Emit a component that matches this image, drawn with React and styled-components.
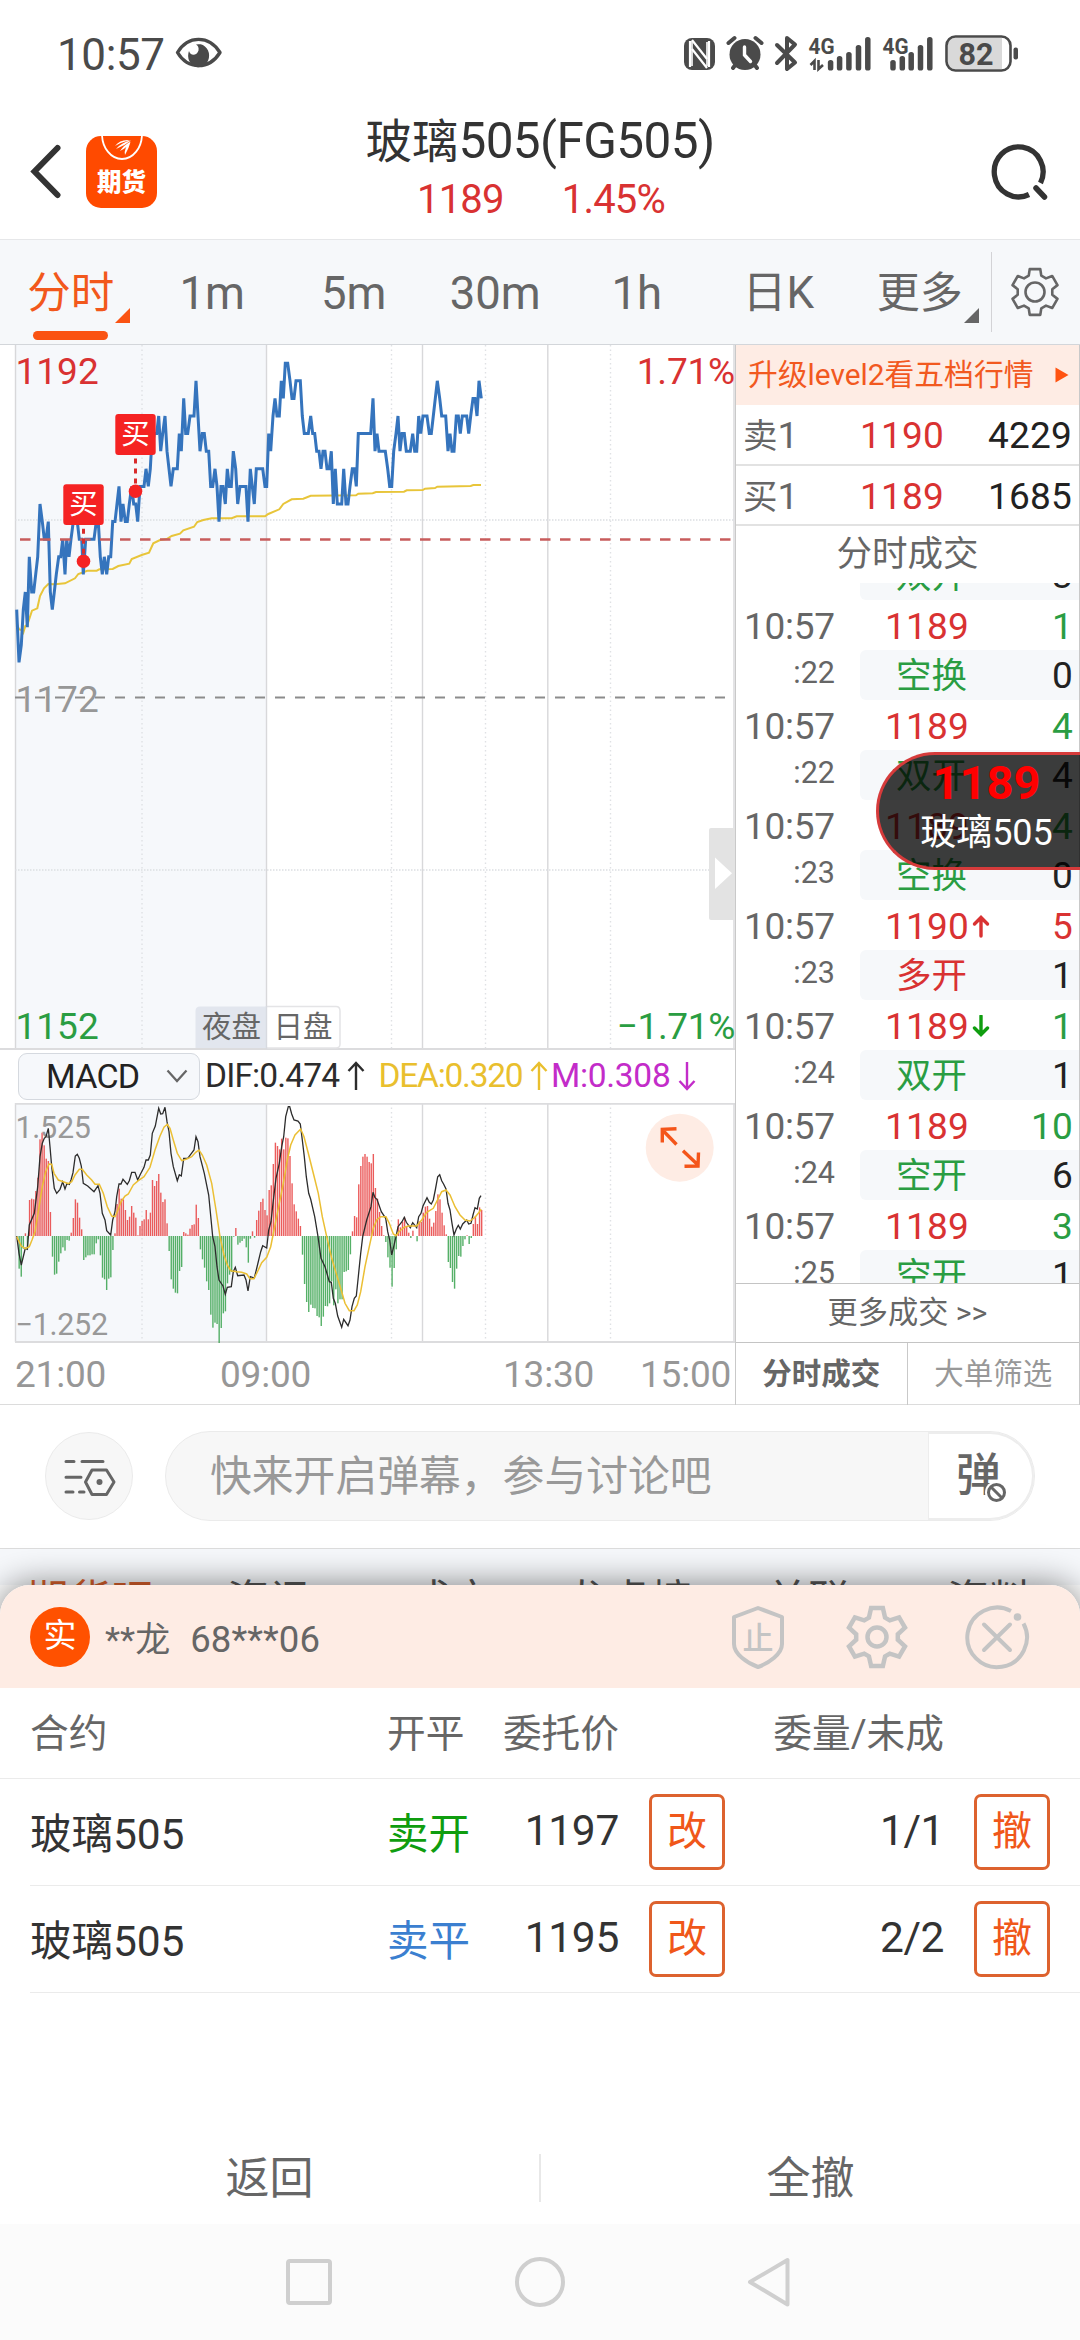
import React from "react";
import styled, { createGlobalStyle } from "styled-components";

const GlobalStyle = createGlobalStyle`
  * { box-sizing: border-box; }
  body { margin: 0; background: #fff; }
  svg { display: block; flex: none; }
`;

const RED = "#d93232";
const GREEN = "#2a9d42";
const FONT = '"Roboto", "Noto Sans CJK SC", sans-serif';

const Screen = styled.div`
  width: 1080px;
  height: 2340px;
  overflow: hidden;
  background: #fff;
  color: #333;
  font-family: ${FONT};
  display: flex;
  flex-direction: column;
`;

/* ---------- status bar ---------- */
const StatusBar = styled.div`
  height: 108px;
  padding: 0 60px 0 57px;
  display: flex;
  justify-content: space-between;
`;
const Clock = styled.div`
  display: flex;
  gap: 10px;
  padding-top: 29px;
  font-size: 44px;
  line-height: 52px;
  letter-spacing: -0.4px;
  color: #4a4a4a;
`;
const EyeSlot = styled.span`
  padding-top: 7px;
`;
const StatusTray = styled.div`
  padding-top: 32px;
`;

/* ---------- header ---------- */
const Header = styled.header`
  height: 132px;
  padding: 0 30px;
  display: grid;
  grid-template-columns: 200px 1fr 200px;
  border-bottom: 1px solid #e6e7e9;
`;
const HeaderLeft = styled.div`
  display: flex;
  gap: 25px;
  padding-top: 28px;
`;
const AppLogo = styled.div`
  width: 71px;
  height: 72px;
  border-radius: 15px;
  background: #ff4a00;
  overflow: hidden;
  display: flex;
  flex-direction: column;
  align-items: center;
  color: #fff;
  font-weight: 900;
  font-size: 24.5px;
  line-height: 26px;
`;
const LogoText = styled.span`
  margin-top: 6px;
`;
const TitleBlock = styled.div`
  text-align: center;
  color: #333;
`;
const Title = styled.div`
  margin-top: 3px;
  font-size: 46.5px;
  line-height: 60px;
  white-space: nowrap;
`;
const Num = styled.span`
  font-size: ${(p) => p.$size}px;
  letter-spacing: ${(p) => p.$ls || 0}px;
`;
const Quote = styled.div`
  display: flex;
  justify-content: center;
  gap: 58px;
  margin-top: 5px;
  padding-left: 2px;
  font-size: 40px;
  line-height: 46px;
  letter-spacing: -0.8px;
  color: ${RED};
`;
const HeaderRight = styled.div`
  display: flex;
  justify-content: flex-end;
  padding-top: 34px;
`;

/* ---------- period tabs ---------- */
const Periods = styled.nav`
  height: 105px;
  background: #f6f8fa;
  border-bottom: 1px solid #d3d6da;
  display: flex;
  align-items: center;
`;
const Period = styled.div`
  width: 141.5px;
  height: 104px;
  position: relative;
  text-align: center;
  font-size: ${(p) => p.$size || 45.5}px;
  line-height: 107px;
  color: ${(p) => (p.$active ? "#f2581c" : "#666")};
`;
const Underline = styled.i`
  position: absolute;
  left: 33px;
  bottom: 4px;
  width: 75px;
  height: 9px;
  border-radius: 5px;
  background: #fa5312;
`;
const Corner = styled.i`
  position: absolute;
  left: 115px;
  top: 68px;
  border-style: solid;
  border-width: 0 0 15px 15px;
  border-color: transparent transparent ${(p) => p.$color};
`;
const PeriodDivider = styled.div`
  width: 1px;
  height: 80px;
  background: #d3d3d6;
  margin-right: 18px;
`;

/* ---------- market area ---------- */
const Market = styled.section`
  height: 1060px;
  display: grid;
  grid-template-columns: 735px 345px;
  border-bottom: 1px solid #dcdcdc;
`;
const ChartColumn = styled.div`
  display: flex;
  flex-direction: column;
`;
const IndicatorBar = styled.div`
  height: 53px;
  padding-left: 18px;
  display: flex;
  align-items: center;
  font-size: 33.5px;
  line-height: 46px;
  white-space: nowrap;
`;
const Select = styled.div`
  width: 182px;
  height: 47px;
  padding: 0 11px 2px 27px;
  border: 1px solid #d5d9df;
  border-radius: 9px;
  background: #f6f8fb;
  display: flex;
  align-items: center;
  justify-content: space-between;
  color: #222;
  letter-spacing: -0.8px;
  margin-right: 5px;
`;
const Indicator = styled.div`
  display: flex;
  align-items: center;
  width: ${(p) => p.$w}px;
  padding-bottom: 2px;
  color: ${(p) => p.$color};
  letter-spacing: ${(p) => p.$ls}px;
  gap: 8px;
`;
const TimeAxis = styled.div`
  height: 61px;
  padding: 10px 5px 0 15px;
  display: grid;
  grid-template-columns: 205px 283px 137px 1fr;
  font-size: 37px;
  line-height: 44px;
  letter-spacing: -0.2px;
  color: #979797;
`;

/* ---------- order book ---------- */
const Book = styled.aside`
  border-left: 1px solid #c9c9c9;
  border-right: 1px solid #c9c9c9;
  display: flex;
  flex-direction: column;
  position: relative;
`;
const Upgrade = styled.div`
  height: 60px;
  padding: 0 10px 0 12px;
  background: #feece4;
  color: #f2591f;
  font-size: 29.8px;
  line-height: 58px;
  white-space: nowrap;
  display: flex;
  align-items: center;
  justify-content: space-between;
`;
const BookRow = styled.div`
  height: 60.5px;
  padding: 4px 7px 0 7px;
  border-bottom: 2px solid #e2e2e2;
  display: grid;
  grid-template-columns: 117px 90px 1fr;
  align-items: center;
  font-size: 37px;
  line-height: 40px;
`;
const Side = styled.span`
  font-size: 34.5px;
  color: #666;
`;
const Value = styled.span`
  color: ${(p) => p.$color || "#222"};
  text-align: ${(p) => p.$align || "left"};
  letter-spacing: 0.2px;
`;
const TickTitle = styled.div`
  height: 57px;
  text-align: center;
  font-size: 35.5px;
  line-height: 57px;
  color: #666;
`;
const TickList = styled.div`
  height: 700px;
  overflow: hidden;
  display: flex;
  flex-direction: column;
  justify-content: flex-end;
`;
const TickInner = styled.div`
  flex: none;
  margin-bottom: -17px;
`;
const Tick = styled.div`
  height: 100px;
  display: grid;
  grid-template-columns: 124px 1fr;
  color: #666;
  font-size: 37px;
`;
const TickTime = styled.div`
  padding-left: 8px;
  line-height: 53px;
  letter-spacing: -0.3px;
`;
const TickSecond = styled.div`
  padding-right: 25px;
  text-align: right;
  font-size: 30.5px;
  line-height: 39px;
  letter-spacing: 0;
`;
const TickLine = styled.div`
  height: 50px;
  padding: 0 6px 0 ${(p) => (p.$shade ? 36 : 25)}px;
  border-radius: 6px 0 0 6px;
  background: ${(p) => (p.$shade ? "#f6f8fa" : "transparent")};
  display: flex;
  align-items: center;
  line-height: 50px;
  padding-top: ${(p) => (p.$shade ? 1 : 3)}px;
`;
const TickKind = styled.span`
  font-size: 35.5px;
  color: ${(p) => p.$color};
`;
const Grow = styled.span`
  flex: 1;
  padding-left: 3px;
`;
const MoreTicks = styled.div`
  height: 60px;
  border-top: 1px solid #c4c4c4;
  border-bottom: 1px solid #c4c4c4;
  text-align: center;
  font-size: 30.2px;
  line-height: 58px;
  color: #666;
`;
const BookTabs = styled.div`
  flex: 1;
  display: grid;
  grid-template-columns: 1fr 1fr;
  text-align: center;
  font-size: 29.5px;
  line-height: 62px;
`;
const BookTab = styled.div`
  color: ${(p) => (p.$active ? "#666" : "#989898")};
  font-weight: ${(p) => (p.$active ? 700 : 400)};
  border-right: ${(p) => (p.$active ? "1px solid #c9c9c9" : "0")};
`;
const FloatQuote = styled.div`
  position: absolute;
  left: 140px;
  right: -1px;
  top: 407px;
  height: 118px;
  border: 3px solid #d63b3b;
  border-right: 0;
  border-radius: 59px 0 0 59px;
  background: rgba(0, 0, 0, 0.76);
  padding-left: 14px;
  text-align: center;
  color: #fff;
  font-size: 36px;
  line-height: 49px;
`;
const FloatPrice = styled.div`
  padding-top: 2px;
  font-size: 47px;
  line-height: 52px;
  font-weight: 700;
  color: #f00;
`;

/* ---------- comment bar ---------- */
const CommentBar = styled.div`
  height: 144px;
  padding: 26px 45px;
  display: flex;
  align-items: flex-start;
  gap: 32px;
  border-bottom: 1px solid #dcdcdc;
`;
const RoundButton = styled.div`
  width: 88px;
  height: 88px;
  margin-top: 1px;
  border: 1px solid #ebebeb;
  border-radius: 50%;
  background: #f7f7f7;
  display: flex;
  align-items: center;
  justify-content: center;
`;
const Pill = styled.div`
  width: 870px;
  height: 90px;
  border: 1px solid #ebebeb;
  border-radius: 45px;
  background: #f7f7f7;
  display: flex;
  overflow: hidden;
`;
const Placeholder = styled.div`
  width: 762px;
  padding-left: 44px;
  font-size: 41.8px;
  line-height: 89px;
  color: #999;
`;
const BulletToggle = styled.div`
  flex: 1;
  padding-left: 27px;
  background: #fff;
  border: 2px solid #ededed;
  border-left-width: 1px;
  border-radius: 0 44px 44px 0;
  font-size: 45px;
  font-weight: 500;
  line-height: 84px;
  color: #666;
  position: relative;
`;
const BanBadge = styled.div`
  position: absolute;
  left: 56px;
  top: 47px;
`;

/* ---------- covered category tabs ---------- */
const Covered = styled.div`
  height: 36px;
  overflow: hidden;
  background: #f6f8fb;
  padding: 24px 0 0 26px;
  display: grid;
  grid-template-columns: 201px 182px 156px 201px 181px 1fr;
  font-size: 42.5px;
  line-height: 56px;
  color: #555;
`;
const CoveredTab = styled.span`
  color: ${(p) => (p.$active ? "#d9602c" : "#555")};
`;

/* ---------- order sheet ---------- */
const Sheet = styled.section`
  height: 639px;
  flex: none;
  background: #fff;
  border-radius: 30px 30px 0 0;
  box-shadow: 0 0 34px rgba(0, 0, 0, 0.5);
  display: flex;
  flex-direction: column;
`;
const SheetHead = styled.div`
  height: 103px;
  padding: 0 50px 0 30px;
  background: #feece4;
  border-radius: 30px 30px 0 0;
  display: flex;
  align-items: center;
  color: #666;
  font-size: 35px;
`;
const Badge = styled.span`
  width: 60px;
  height: 60px;
  border-radius: 50%;
  background: #ff5100;
  color: #fff;
  font-size: 33px;
  line-height: 58px;
  text-align: center;
  margin-right: 15px;
`;
const Account = styled.span`
  flex: 1;
  display: flex;
  align-items: baseline;
  gap: 20px;
  padding-bottom: 1px;
`;
const SheetIcons = styled.div`
  display: flex;
  align-items: center;
  gap: 56px;
`;
const OrderGrid = styled.div`
  display: grid;
  grid-template-columns: 357px 106px 126px 106px 1fr 106px;
  align-items: center;
`;
const HeadRow = styled(OrderGrid)`
  height: 91px;
  padding: 0 30px 4px;
  border-bottom: 1px solid #ebebeb;
  font-size: 38.7px;
  color: #666;
  white-space: nowrap;
`;
const Order = styled(OrderGrid)`
  height: 107px;
  margin-left: 30px;
  padding-right: 30px;
  border-bottom: 1px solid #ebebeb;
  font-size: 41.5px;
  color: #333;
`;
const Cell = styled.span`
  color: ${(p) => p.$color || "inherit"};
  text-align: ${(p) => p.$align || "left"};
  padding-bottom: 3px;
`;
const Action = styled.span`
  justify-self: end;
  width: 76px;
  height: 76px;
  border: 3px solid #dd622e;
  border-radius: 7px;
  text-align: center;
  font-size: 40px;
  line-height: 70px;
  color: #f0571a;
`;
const SheetFoot = styled.div`
  margin-top: auto;
  height: 90px;
  display: grid;
  grid-template-columns: 1fr 2px 1fr;
  text-align: center;
  font-size: 44px;
  line-height: 91px;
  color: #666;
`;
const FootDivider = styled.i`
  height: 48px;
  margin-top: 20px;
  background: #e8e8e8;
`;
const SystemNav = styled.div`
  flex: 1;
  position: relative;
  background: #fbfbfb;
  display: flex;
  justify-content: center;
  align-items: center;
`;

/* ---------- icons ---------- */
function gearPath(c, outer, inner, outerHalf, innerHalf) {
  const pts = [];
  for (let k = 0; k < 6; k++) {
    const base = -90 + 60 * k;
    [[inner, -innerHalf], [outer, -outerHalf], [outer, outerHalf], [inner, innerHalf]].forEach(([r, a]) => {
      const t = ((base + a) * Math.PI) / 180;
      pts.push(`${(c + r * Math.cos(t)).toFixed(2)},${(c + r * Math.sin(t)).toFixed(2)}`);
    });
  }
  return `M${pts.join("L")}Z`;
}

const SIGNAL = [[830.6, 60], [839.6, 56], [848.9, 52], [858.5, 45], [867.8, 37], [893, 60], [902.3, 56], [911.2, 52], [920.5, 45], [929.8, 37]];

const StatusIcons = () => (
  <svg width="338" height="44" viewBox="682 32 338 44">
    <g fill="#4a4a4a">
      <rect x="684" y="38" width="31" height="32" rx="8" />
      <path d="M690 41V67M709 41V67M692 40L707 59M692 49L707 68" stroke="#fff" strokeWidth="2.2" fill="none" />
      <path d="M692 66V41M707 42V66" fill="none" stroke="#fff" strokeWidth="1.600" />
      <circle cx="745" cy="54.500" r="15.500" />
      <path d="M733 68l3-4M757 68l-3-4M728.500 43l6-5M761.500 43l-6-5" stroke="#4a4a4a" strokeWidth="4" strokeLinecap="round" />
      <path d="M744.500 47v8l6 6.500" stroke="#fff" strokeWidth="3.400" fill="none" strokeLinecap="round" />
      <path d="M777 45L795 62.500L787 69V38L795 44.500L777 63" fill="none" stroke="#4a4a4a" strokeWidth="4" strokeLinejoin="round" strokeLinecap="round" />
      <text x="808.500" y="53.500" fontFamily={FONT} fontWeight="700" fontSize="21.500" textLength="26" lengthAdjust="spacingAndGlyphs">4G</text>
      <text x="882.500" y="53.500" fontFamily={FONT} fontWeight="700" fontSize="21.500" textLength="26" lengthAdjust="spacingAndGlyphs">4G</text>
      <path d="M814.500 70V61L810.500 65M818.500 60V69L823 65" stroke="#4a4a4a" strokeWidth="2.600" fill="none" />
      {SIGNAL.map(([x, y]) => (
        <rect key={x} x={x - 2.75} y={y} width="5.500" height={70.5 - y} rx="2.600" />
      ))}
      <path d="M953 38H1002V69H953Q948 69 948 63V44Q948 38 953 38Z" fill="#d9d9d9" />
      <rect x="946.500" y="36.500" width="64" height="34" rx="9" fill="none" stroke="#4a4a4a" strokeWidth="2.600" />
      <rect x="1013.500" y="47.500" width="4.500" height="12" rx="2" />
      <text x="976" y="64.700" textAnchor="middle" fontFamily={FONT} fontWeight="700" fontSize="30.500">82</text>
    </g>
  </svg>
);

const EyeIcon = () => (
  <svg width="48" height="34" viewBox="0 0 48 34">
    <path d="M2.500 16.500C13-1 34-1 45 16.500C34 34 13 34 2.500 16.500Z" fill="none" stroke="#4a4a4a" strokeWidth="3.400" strokeLinejoin="round" />
    <path d="M21 8.500A10.500 11.500 0 1 1 14 15C15 20 22 20 23.500 14.500C24 11.500 23 9.500 21 8.500Z" fill="#4a4a4a" />
  </svg>
);

const Arrow = ({ down, color }) => (
  <svg width="18" height="30" viewBox="0 0 18 30">
    <path d={down ? "M9 1V28M1.500 20L9 28L16.500 20" : "M9 29V2M1.500 10L9 2L16.500 10"} fill="none" stroke={color} strokeWidth="2.400" />
  </svg>
);

const TickArrow = ({ down }) => (
  <svg width="18" height="24" viewBox="0 0 18 24">
    <path d={down ? "M9 1V19M2.500 13L9 19.500L15.500 13" : "M9 21V3M2.500 9L9 2.500L15.500 9"} fill="none" stroke={down ? "#0f9d0f" : RED} strokeWidth="3.400" strokeLinecap="round" />
  </svg>
);

/* ---------- chart data ---------- */
// Flat lists of x, value pairs; x runs in thirds of a pixel.
const PRICE = [50,1177,57,1174,64,1175,70,1177,76,1178,82,1176,88,1180,95,1178,101,1178,107,1179,113,1180,120,1183,127,1182,133,1181,138,1181,145,1182,151,1178,157,1177,163,1178,169,1179,176,1180,182,1180,188,1181,195,1179,200,1181,207,1180,213,1181,220,1182,232,1182,238,1181,245,1181,250,1179,257,1181,282,1181,289,1182,295,1182,301,1180,307,1179,313,1180,320,1179,326,1180,332,1180,338,1182,345,1182,351,1183,357,1184,363,1182,369,1183,376,1182,382,1182,388,1183,395,1184,401,1183,407,1183,413,1182,420,1184,432,1184,438,1185,445,1184,451,1185,454,1186,463,1187,470,1187,476,1188,482,1186,488,1187,495,1188,501,1186,507,1185,513,1184,520,1185,532,1185,538,1187,544,1186,551,1189,557,1187,563,1187,570,1188,582,1188,588,1190,594,1188,600,1186,607,1187,613,1187,619,1186,626,1186,632,1184,638,1184,645,1185,651,1184,657,1182,663,1184,669,1184,676,1183,682,1185,688,1184,694,1184,700,1186,707,1185,713,1183,720,1184,738,1184,744,1182,751,1185,757,1184,763,1183,769,1185,788,1185,795,1184,800,1184,806,1187,812,1186,819,1188,825,1189,831,1188,838,1188,844,1190,850,1189,856,1191,863,1191,870,1190,876,1189,882,1189,888,1190,901,1190,907,1188,913,1187,925,1187,932,1188,938,1187,944,1187,950,1186,957,1186,963,1185,969,1186,975,1186,981,1185,988,1185,994,1186,1000,1183,1006,1185,1012,1183,1025,1183,1031,1185,1038,1183,1044,1183,1050,1184,1057,1185,1063,1185,1069,1184,1075,1187,1112,1187,1119,1189,1125,1186,1131,1187,1137,1186,1156,1186,1163,1185,1169,1184,1175,1184,1181,1186,1188,1187,1194,1188,1200,1186,1206,1187,1213,1187,1219,1186,1231,1186,1238,1187,1244,1186,1250,1186,1256,1188,1262,1187,1269,1188,1281,1188,1288,1187,1294,1187,1300,1188,1306,1189,1312,1190,1319,1189,1325,1188,1337,1188,1344,1186,1350,1187,1356,1186,1362,1186,1369,1188,1375,1188,1381,1187,1387,1188,1400,1188,1406,1187,1412,1188,1419,1189,1425,1189,1431,1188,1437,1190,1444,1189];
const AVERAGE = [50,850,57,868,64,870,70,878,76,858,82,855,90,830,96,812,112,805,120,768,132,745,145,732,165,733,195,730,225,715,235,702,262,692,290,692,298,688,338,687,355,678,388,671,395,657,425,645,447,638,460,610,480,600,500,597,515,588,540,581,550,571,582,560,592,546,610,540,635,535,695,535,710,529,795,529,805,522,838,508,850,492,875,478,910,476,932,467,1068,466,1075,461,1118,460,1128,456,1212,455,1220,451,1268,450,1275,446,1305,444,1312,440,1412,438,1420,435,1443,435];
const HIST = [52,0,57,-98,64,-122,70,-38,76,8,82,-40,88,108,95,112,101,110,107,135,113,175,119,290,126,310,132,272,138,232,145,225,151,72,157,-62,163,-116,169,-113,176,-77,182,-52,188,-34,195,-44,201,-12,207,-14,213,10,219,54,226,110,232,100,238,55,244,20,250,-72,257,-64,263,-58,282,-55,288,-22,294,-10,301,-58,307,-125,313,-130,319,-162,326,-128,332,-124,338,-42,344,8,351,96,357,142,363,112,370,110,376,78,382,48,388,58,394,90,401,70,407,55,413,2,419,30,426,45,432,50,438,78,444,50,451,70,457,168,463,150,470,165,476,186,482,130,488,102,495,110,501,38,507,-45,513,-130,519,-158,526,-170,532,-172,538,-105,544,-93,551,12,557,8,563,4,569,22,576,33,582,35,588,94,594,54,600,-40,607,-70,613,-95,619,-136,626,-162,632,-236,638,-275,644,-260,651,-264,657,-322,663,-276,669,-232,676,-226,682,-142,688,-116,694,-108,700,-2,707,24,713,-26,719,-20,726,-15,732,-8,738,-34,744,-80,751,-8,757,14,763,-5,769,48,776,76,782,102,788,112,794,78,800,62,806,138,812,152,819,216,825,280,831,270,838,260,844,292,850,260,856,295,863,293,869,240,876,158,882,95,888,74,894,52,900,30,907,-56,913,-144,919,-198,926,-228,932,-206,938,-216,944,-217,950,-240,957,-244,963,-270,969,-242,975,-210,982,-211,988,-202,994,-136,1000,-208,1006,-160,1013,-202,1019,-190,1025,-190,1031,-108,1038,-106,1044,-102,1050,-55,1057,14,1063,60,1069,56,1075,155,1082,210,1088,238,1094,246,1100,238,1106,222,1113,218,1119,246,1125,144,1131,112,1138,72,1144,30,1150,2,1157,-18,1163,-64,1169,-95,1175,-152,1181,-96,1188,-40,1194,50,1200,26,1206,42,1213,56,1219,30,1225,10,1231,-6,1238,16,1244,0,1250,-16,1256,44,1263,42,1269,70,1275,88,1281,90,1288,52,1294,28,1300,40,1306,75,1313,125,1319,110,1325,70,1331,32,1338,5,1344,-78,1350,-96,1356,-138,1363,-158,1369,-98,1375,-60,1381,-62,1388,-30,1394,-10,1400,2,1406,-24,1413,-6,1419,36,1425,60,1431,36,1438,86,1444,78];
const DIF = [50,588,57,640,64,675,76,625,82,628,88,555,103,520,113,440,120,350,127,310,133,295,138,290,145,265,150,320,155,380,163,445,170,460,180,448,188,425,195,447,201,430,208,433,213,420,219,398,226,348,232,343,238,355,244,378,250,430,263,438,282,455,294,437,300,460,307,520,315,540,320,572,332,585,338,540,345,515,350,470,357,432,363,432,369,418,382,433,388,422,395,397,405,397,413,420,420,405,432,382,438,360,445,360,451,345,457,280,466,258,476,205,482,222,488,221,495,202,501,245,507,275,513,340,520,380,532,422,538,404,544,408,551,355,563,355,576,338,582,330,588,290,594,305,600,350,613,400,626,465,638,590,645,620,651,680,657,720,669,738,676,763,682,742,694,740,700,695,706,682,713,707,732,705,738,720,744,753,751,710,763,714,769,690,782,635,788,617,800,624,806,570,813,545,819,490,828,415,838,370,845,320,851,290,857,230,865,200,869,200,875,222,882,240,894,243,901,252,907,300,913,350,919,410,926,460,932,478,944,530,954,590,963,655,975,680,988,725,994,727,1000,775,1006,790,1013,828,1025,862,1031,838,1044,857,1050,840,1056,800,1063,775,1069,768,1075,710,1082,640,1088,590,1100,540,1113,500,1119,457,1125,473,1131,478,1144,515,1157,535,1163,575,1169,600,1175,645,1181,620,1188,590,1194,560,1206,545,1213,532,1219,547,1231,563,1238,548,1250,563,1256,530,1263,520,1269,498,1281,473,1288,487,1294,492,1300,480,1306,450,1313,410,1319,404,1325,422,1331,433,1338,447,1344,490,1350,510,1356,550,1362,585,1369,567,1375,556,1381,567,1388,552,1400,540,1406,552,1413,550,1419,525,1425,503,1432,507,1438,475,1443,467];
const DEA = [50,590,64,618,76,626,88,620,96,600,105,575,115,515,127,440,137,395,147,372,155,373,162,400,175,420,190,425,205,431,215,425,225,405,238,388,247,388,260,405,275,420,285,433,298,433,310,460,322,500,335,528,345,530,355,508,363,485,375,468,385,462,400,435,415,422,432,410,450,382,465,330,480,288,492,262,502,253,510,265,520,300,532,340,545,362,560,357,575,350,587,337,597,330,607,345,620,375,635,430,648,510,660,590,672,645,682,675,692,692,710,695,725,697,740,702,750,716,762,716,775,690,785,668,800,652,812,620,825,555,838,490,850,430,862,360,872,315,885,285,902,267,912,290,925,340,940,400,955,460,967,530,980,590,995,655,1010,705,1025,755,1035,790,1048,812,1062,812,1072,795,1082,755,1095,680,1110,610,1120,565,1130,540,1142,530,1158,530,1168,550,1180,582,1188,587,1197,575,1212,562,1225,558,1250,558,1265,540,1280,517,1300,505,1315,475,1325,455,1338,450,1350,465,1365,500,1380,525,1395,540,1410,543,1425,532,1435,520,1444,508];

function line(data, toY) {
  const out = [];
  for (let i = 0; i < data.length; i += 2) out.push(`${(data[i] / 3).toFixed(1)},${toY(data[i + 1]).toFixed(1)}`);
  return out.join(" ");
}
const priceY = (v) => 352.6 - (v - 1172) * 17.6;

function bars() {
  const out = [];
  let k = 0;
  for (let x = 57.5; x <= 1445; x += 6.25) {
    while (k + 4 < HIST.length && HIST[k + 2] < x) k += 2;
    const near = Math.abs(HIST[k] - x) < Math.abs(HIST[k + 2] - x) ? k : k + 2;
    out.push([x / 3, HIST[near + 1] / 3]);
  }
  return out;
}

const Grid = ({ h }) => (
  <g fill="none" strokeWidth="1.400">
    <rect x="15" y="0" width="251.500" height={h} fill="#f6f8fb" />
    <path d={`M15.500 0V${h}M266.500 0V${h}M422.500 0V${h}M547.800 0V${h}M734 0V${h}`} stroke="#d8d8da" />
    <path d={`M142 0V${h}M391.500 0V${h}M485.500 0V${h}M610.500 0V${h}`} stroke="#dfe1e4" strokeDasharray="1.500 3" />
  </g>
);

const BuyMark = ({ x, y, dotY }) => (
  <g>
    <path d={`M${x} ${y + 24}V${dotY}`} stroke="#d92c2c" strokeWidth="3" strokeDasharray="5 5" />
    <rect x={x - 20.2} y={y - 20.4} width="40.400" height="40.800" rx="3" fill="#f52323" />
    <text x={x} y={y + 9.5} textAnchor="middle" fontSize="28.500" fill="#fff">买</text>
    <circle cx={x} cy={dotY} r="6.800" fill="#f52323" />
  </g>
);

const PriceChart = () => (
  <svg width="735" height="705" viewBox="0 0 735 705" fontFamily={FONT} fontSize="37">
    <Grid h={704} />
    <path d="M15 175H735M15 525H735" stroke="#dcdee2" strokeWidth="1.400" strokeDasharray="1.500 1.500" />
    <path d="M0 704H735" stroke="#dcdcde" strokeWidth="2" />
    <polyline points={line(AVERAGE, (v) => v / 3 - 5)} fill="none" stroke="#e8c53a" strokeWidth="2" />
    <polyline points={line(PRICE, priceY)} fill="none" stroke="#3574bd" strokeWidth="3" />
    <path d="M20 194.500H735" stroke="#c85c5c" strokeWidth="2.400" strokeDasharray="10.500 9.500" />
    <BuyMark x={83.5} y={159.7} dotY={216.3} />
    <BuyMark x={135.5} y={89.5} dotY={146.3} />
    <text x="15.500" y="38.700" fill={RED}>1192</text>
    <text x="735" y="38.700" fill={RED} textAnchor="end" letterSpacing="-0.200">1.71%</text>
    <text x="15.500" y="367" fill="#979797">1172</text>
    <path d="M15 352.600H730" stroke="#8c8c8c" strokeWidth="2" strokeDasharray="10 10" />
    <text x="15.500" y="694" fill={GREEN}>1152</text>
    <text x="735" y="694" fill={GREEN} textAnchor="end" letterSpacing="-0.350">−1.71%</text>
    <path d="M195.500 703V666Q195.500 661.500 200 661.500H267V703Z" fill="#e2e6ee" />
    <path d="M267 661.500H336Q340 661.500 340 666V699Q340 703 336 703H267" fill="#fff" stroke="#e4e4e6" strokeWidth="1.500" />
    <path d="M266.500 661V704" stroke="#d8dae0" strokeWidth="1.400" />
    <text x="202" y="692" fontSize="29.500" fill="#666">夜盘</text>
    <text x="273.500" y="692" fontSize="29.500" fill="#666">日盘</text>
    <rect x="709" y="483" width="27" height="92" rx="2" fill="#e3e3e3" />
    <path d="M715 512.500V544L732 528.300Z" fill="#fff" />
  </svg>
);

const MacdChart = () => (
  <svg width="735" height="240" viewBox="0 0 735 240" fontFamily={FONT} fontSize="30.500">
    <Grid h={239} />
    <path d="M15 0.700H735M15 239H735" stroke="#dcdcde" strokeWidth="2" />
    {bars().map(([x, v], i) => (
      <rect key={i} x={x - 0.7} y={v > 0 ? 133 - v : 133} width="1.400" height={Math.abs(v)} fill={v > 0 ? "#e84040" : "#37a24c"} opacity="0.85" />
    ))}
    <text x="15.500" y="34.700" fill="#999" letterSpacing="-0.300">1.525</text>
    <text x="15.500" y="232" fill="#999" letterSpacing="-0.300">−1.252</text>
    <polyline points={line(DIF, (v) => v / 3 - 63)} fill="none" stroke="#2c2c2c" strokeWidth="1.300" />
    <polyline points={line(DEA, (v) => v / 3 - 63)} fill="none" stroke="#ebbf34" strokeWidth="1.500" />
    <circle cx="679.700" cy="44.700" r="34" fill="#feece4" />
    <path d="M676.500 41.500L663 27.500M662.300 39.500V26.300L676.500 25.800M683 47.800L697.500 61.500M684.500 63.300L698 63L698.500 49.500" fill="none" stroke="#f4551a" strokeWidth="3.400" />
  </svg>
);

const TICKS = [
  { s: ":21", price: "1189", vol: "1", kind: "双开", d: "3" },
  { s: ":22", price: "1189", vol: "1", kind: "空换", d: "0" },
  { s: ":22", price: "1189", vol: "4", kind: "双开", d: "4" },
  { s: ":23", price: "1189", vol: "4", kind: "空换", d: "0" },
  { s: ":23", price: "1190", vol: "5", kind: "多开", d: "1", dir: "up" },
  { s: ":24", price: "1189", vol: "1", kind: "双开", d: "1", dir: "down" },
  { s: ":24", price: "1189", vol: "10", kind: "空开", d: "6" },
  { s: ":25", price: "1189", vol: "3", kind: "空开", d: "1" },
];

const ORDERS = [
  { side: "卖开", color: "#0f9d0f", price: "1197", qty: "1/1" },
  { side: "卖平", color: "#3b7fd0", price: "1195", qty: "2/2" },
];

export default function App() {
  return (
    <Screen>
      <GlobalStyle />
      <StatusBar>
        <Clock>10:57<EyeSlot><EyeIcon /></EyeSlot></Clock>
        <StatusTray><StatusIcons /></StatusTray>
      </StatusBar>

      <Header>
        <HeaderLeft>
          <svg width="31" height="72" viewBox="0 0 31 72">
            <path d="M27.500 12L4.500 35.500L27.500 59" fill="none" stroke="#333" strokeWidth="6" strokeLinecap="round" />
          </svg>
          <AppLogo>
            <svg width="72" height="28" viewBox="0 0 72 28">
              <path d="M16 -2A20 25 0 0 0 56 -2" fill="none" stroke="#fff" strokeWidth="1.800" />
              <path d="M29 10Q34 3 44 4Q36 6 29 10ZM30 13Q36 6 45 4.500Q38 10 30 13ZM34 15Q38 9 44.500 5.500Q41 12 34 15ZM39 19Q37.500 12 44.500 6Q43 12 39 19Z" fill="#fff" />
            </svg>
            <LogoText>期货</LogoText>
          </AppLogo>
        </HeaderLeft>
        <TitleBlock>
          <Title>玻璃<Num $size={49.5} $ls={-0.6}>505(FG505)</Num></Title>
          <Quote><span>1189</span><span>1.45%</span></Quote>
        </TitleBlock>
        <HeaderRight>
          <svg width="60" height="60" viewBox="0 0 60 60">
            <path d="M39 52.500A24.400 25 0 1 1 50.500 41" fill="none" stroke="#333" strokeWidth="5.300" />
            <path d="M46 46L54.500 55" stroke="#333" strokeWidth="5.500" strokeLinecap="round" />
          </svg>
        </HeaderRight>
      </Header>

      <Periods>
        <Period $active $size={43.5}>分时<Corner $color="#fa5312" /><Underline /></Period>
        <Period>1m</Period>
        <Period>5m</Period>
        <Period>30m</Period>
        <Period>1h</Period>
        <Period $size={44}>日K</Period>
        <Period $size={43}>更多<Corner $color="#666" /></Period>
        <PeriodDivider />
        <svg width="50" height="50" viewBox="0 0 50 50">
          <path d={gearPath(25, 23.5, 17.5, 13, 21)} fill="none" stroke="#666" strokeWidth="2.600" strokeLinejoin="round" />
          <circle cx="25" cy="25" r="9.500" fill="none" stroke="#666" strokeWidth="2.600" />
        </svg>
      </Periods>

      <Market>
        <ChartColumn>
          <PriceChart />
          <IndicatorBar>
            <Select>
              <Num $size={34} $ls={-0.8}>MACD</Num>
              <svg width="22" height="14" viewBox="0 0 22 14"><path d="M1.500 1.500L11 12L20.500 1.500" fill="none" stroke="#666" strokeWidth="2.200" /></svg>
            </Select>
            <Indicator $w={173.5} $color="#2c2c2c" $ls={-0.85}>DIF:0.474<Arrow color="#2c2c2c" /></Indicator>
            <Indicator $w={172.5} $color="#e9bf2e" $ls={-1.25}>DEA:0.320<Arrow color="#e9bf2e" /></Indicator>
            <Indicator $w={170} $color="#c32cc9" $ls={-0.3}>M:0.308<Arrow down color="#c32cc9" /></Indicator>
          </IndicatorBar>
          <MacdChart />
          <TimeAxis><span>21:00</span><span>09:00</span><span>13:30</span><span>15:00</span></TimeAxis>
        </ChartColumn>

        <Book>
          <Upgrade>
            升级level2看五档行情
            <svg width="14" height="16" viewBox="0 0 14 16"><path d="M0.500 0.500L13.500 8L0.500 15.500Z" fill="#ff5310" /></svg>
          </Upgrade>
          <BookRow><Side>卖<Num $size={37}>1</Num></Side><Value $color={RED}>1190</Value><Value $align="right">4229</Value></BookRow>
          <BookRow><Side>买<Num $size={37}>1</Num></Side><Value $color={RED}>1189</Value><Value $align="right">1685</Value></BookRow>
          <TickTitle>分时成交</TickTitle>
          <TickList>
            <TickInner>
              {TICKS.map((t, i) => (
                <Tick key={i}>
                  <div>
                    <TickTime>10:57</TickTime>
                    <TickSecond>{t.s}</TickSecond>
                  </div>
                  <div>
                    <TickLine>
                      <Value $color={RED}>{t.price}</Value>
                      <Grow>{t.dir && <TickArrow down={t.dir === "down"} />}</Grow>
                      <Value $color={t.dir === "up" ? RED : GREEN}>{t.vol}</Value>
                    </TickLine>
                    <TickLine $shade>
                      <TickKind $color={t.kind === "多开" ? RED : GREEN}>{t.kind}</TickKind>
                      <Grow />
                      <Value>{t.d}</Value>
                    </TickLine>
                  </div>
                </Tick>
              ))}
            </TickInner>
          </TickList>
          <MoreTicks>更多成交 &gt;&gt;</MoreTicks>
          <BookTabs>
            <BookTab $active>分时成交</BookTab>
            <BookTab>大单筛选</BookTab>
          </BookTabs>
          <FloatQuote>
            <FloatPrice>1189</FloatPrice>
            玻璃505
          </FloatQuote>
        </Book>
      </Market>

      <CommentBar>
        <RoundButton>
          <svg width="54" height="40" viewBox="65 1456 54 40">
            <g fill="none" stroke="#666" strokeWidth="3" strokeLinecap="round">
              <path d="M69 1461.500H77M85 1461.500H106M69 1477.300H84M69 1492H76M82.500 1492H87" />
              <path d="M95 1470H109.500L117 1482L109.500 1494.500H95L88.500 1482Z" strokeLinejoin="round" />
            </g>
            <circle cx="102.500" cy="1482" r="3" fill="#666" />
          </svg>
        </RoundButton>
        <Pill>
          <Placeholder>快来开启弹幕，参与讨论吧</Placeholder>
          <BulletToggle>
            弹
            <BanBadge>
              <svg width="23" height="23" viewBox="0 0 23 23">
                <circle cx="11.500" cy="11.500" r="11.500" fill="#fff" />
                <circle cx="11.500" cy="11.500" r="8" fill="none" stroke="#666" strokeWidth="3" />
                <path d="M6 6L17 17" stroke="#666" strokeWidth="3" />
              </svg>
            </BanBadge>
          </BulletToggle>
        </Pill>
      </CommentBar>

      <Covered>
        <CoveredTab $active>期货吧</CoveredTab>
        <CoveredTab>资讯</CoveredTab>
        <CoveredTab>成交</CoveredTab>
        <CoveredTab>龙虎榜</CoveredTab>
        <CoveredTab>关联</CoveredTab>
        <CoveredTab>资料</CoveredTab>
      </Covered>

      <Sheet>
        <SheetHead>
          <Badge>实</Badge>
          <Account><span>**龙</span><Num $size={36.5} $ls={0.1}>68***06</Num></Account>
          <SheetIcons>
            <svg width="56" height="66" viewBox="0 0 56 66" fill="none" stroke="#c4c4c4" strokeWidth="4">
              <path d="M28 4L52 13V40C52 50 39 59 28 63C17 59 4 50 4 40V13Z" strokeLinejoin="round" />
              <text x="28" y="45" textAnchor="middle" fontFamily={FONT} fontSize="31" fontWeight="500" fill="#c4c4c4" stroke="none">止</text>
            </svg>
            <svg width="66" height="66" viewBox="0 0 66 66" fill="none" stroke="#c4c4c4" strokeWidth="4.500">
              <path d={gearPath(35, 29.5, 21, 11.5, 22.5)} transform="translate(0 -2)" />
              <circle cx="35" cy="33" r="9.500" />
            </svg>
            <svg width="66" height="66" viewBox="0 0 66 66" fill="none" stroke="#c4c4c4" strokeWidth="4" strokeLinecap="round">
              <path d="M47 7A29.800 29.800 0 1 0 59.500 19.500" strokeLinecap="butt" />
              <path d="M20 20.500L46 46M46 20.500L20 46" />
              <circle cx="53.500" cy="13" r="3.800" fill="#c4c4c4" stroke="none" />
            </svg>
          </SheetIcons>
        </SheetHead>
        <HeadRow>
          <Cell>合约</Cell>
          <Cell>开平</Cell>
          <Cell $align="right">委托价</Cell>
          <Cell />
          <Cell $align="right">委量/未成</Cell>
          <Cell />
        </HeadRow>
        {ORDERS.map((o) => (
          <Order key={o.price}>
            <Cell>玻璃<Num $size={42.5} $ls={-0.2}>505</Num></Cell>
            <Cell $color={o.color}>{o.side}</Cell>
            <Cell $align="right"><Num $size={42.5} $ls={-0.3}>{o.price}</Num></Cell>
            <Action>改</Action>
            <Cell $align="right"><Num $size={42.5} $ls={-0.4}>{o.qty}</Num></Cell>
            <Action>撤</Action>
          </Order>
        ))}
        <SheetFoot>
          <span>返回</span>
          <FootDivider />
          <span>全撤</span>
        </SheetFoot>
      </Sheet>

      <SystemNav>
        <svg width="520" height="56" viewBox="280 2254 520 56" fill="none" stroke="#cfcfcf" strokeWidth="4">
          <rect x="288" y="2261" width="42" height="42" rx="2" />
          <circle cx="540" cy="2282" r="23" />
          <path d="M787.500 2260V2304.500L750 2282Z" strokeLinejoin="round" />
        </svg>
      </SystemNav>
    </Screen>
  );
}
